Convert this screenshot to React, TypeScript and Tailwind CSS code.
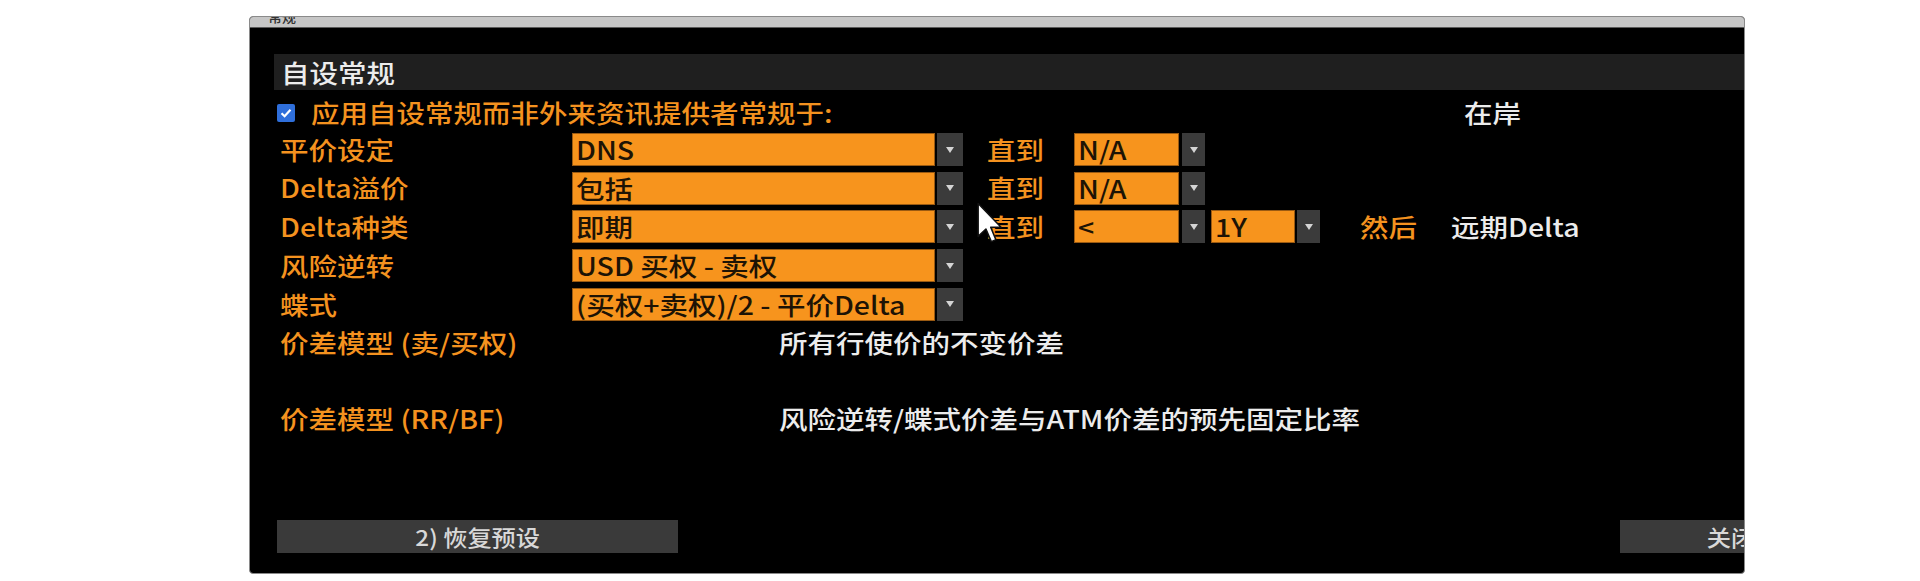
import React from 'react';

const T = ({ children, className = '' }: { children: React.ReactNode; className?: string }) => (
  <span className={`inline-block origin-left scale-x-[1.14] whitespace-nowrap leading-none ${className}`}>{children}</span>
);

const Arrow = ({ w }: { w: string }) => (
  <div className={`${w} h-[33px] shrink-0 bg-[#3b3b3b] flex items-center justify-center`}>
    <svg width="8" height="6" viewBox="0 0 8 6">
      <path d="M0 0h8L4 6z" fill="#d4d4d4" />
    </svg>
  </div>
);

const Field = ({ w, children }: { w: string; children: React.ReactNode }) => (
  <div className={`${w} h-[33px] shrink-0 bg-[#f7941d] border border-[#9a5a12] flex items-center pl-[3px] text-[#1d1305]`}>
    <T>{children}</T>
  </div>
);

const Label = ({ children, w = 'w-[298px]' }: { children: React.ReactNode; w?: string }) => (
  <div className={`${w} shrink-0 pl-[6px] text-[#f4921f]`}>
    <T>{children}</T>
  </div>
);

const Until = () => (
  <div className="ml-[24px] w-[87px] shrink-0 text-[#f4921f]">
    <T>直到</T>
  </div>
);

export default function App() {
  return (
    <div className="min-h-[581px] w-[1920px] bg-white pt-[16px] pl-[249px] font-['Noto_Sans_CJK_SC','Noto_Sans',sans-serif] text-[25px] font-medium">
      <div className="relative w-[1496px] h-[558px] bg-black border border-[#8a8a8a] rounded-[4px] overflow-hidden">
        {/* title bar */}
        <div className="h-[11px] bg-[#c6c6c6] border-b border-[#5a5a5a] overflow-hidden pl-[18px]">
          <div className="-mt-[8px] text-[14px] leading-none text-[#333]">常规</div>
        </div>

        <div className="pl-[24px] w-[1700px]">
          {/* header strip */}
          <div className="mt-[26px] h-[36px] bg-[#1f1f1f] flex items-center pl-[7px] text-[#ececec]">
            <T>自设常规</T>
          </div>

          {/* checkbox row */}
          <div className="mt-[6px] h-[33px] flex items-center">
            <div className="ml-[3px] w-[18px] h-[18px] rounded-[2px] bg-[#2f6fdb] flex items-center justify-center shrink-0">
              <svg width="12" height="10" viewBox="0 0 12 10">
                <path d="M1.5 5.2 L4.6 8.2 L10.5 1.8" stroke="#fff" strokeWidth="2.2" fill="none" />
              </svg>
            </div>
            <div className="ml-[16px] w-[1153px] shrink-0 text-[#f4921f]">
              <T>应用自设常规而非外来资讯提供者常规于:</T>
            </div>
            <div className="text-[#ececec]">
              <T>在岸</T>
            </div>
          </div>

          {/* rows */}
          <div className="mt-[4px] flex flex-col gap-[5.7px]">
            <div className="h-[33px] flex items-center">
              <Label>平价设定</Label>
              <Field w="w-[363px]">DNS</Field>
              <div className="ml-[2px]"><Arrow w="w-[26px]" /></div>
              <Until />
              <Field w="w-[105px]">N/A</Field>
              <div className="ml-[3px]"><Arrow w="w-[23px]" /></div>
            </div>
            <div className="h-[33px] flex items-center">
              <Label>Delta溢价</Label>
              <Field w="w-[363px]">包括</Field>
              <div className="ml-[2px]"><Arrow w="w-[26px]" /></div>
              <Until />
              <Field w="w-[105px]">N/A</Field>
              <div className="ml-[3px]"><Arrow w="w-[23px]" /></div>
            </div>
            <div className="h-[33px] flex items-center">
              <Label>Delta种类</Label>
              <Field w="w-[363px]">即期</Field>
              <div className="ml-[2px]"><Arrow w="w-[26px]" /></div>
              <Until />
              <Field w="w-[105px]">&lt;</Field>
              <div className="ml-[3px]"><Arrow w="w-[23px]" /></div>
              <div className="ml-[6px]"><Field w="w-[84px]">1Y</Field></div>
              <div className="ml-[2px]"><Arrow w="w-[23px]" /></div>
              <div className="ml-[40px] w-[91px] shrink-0 text-[#f4921f]"><T>然后</T></div>
              <div className="text-[#ececec]"><T>远期Delta</T></div>
            </div>
            <div className="h-[33px] flex items-center">
              <Label>风险逆转</Label>
              <Field w="w-[363px]">USD 买权 - 卖权</Field>
              <div className="ml-[2px]"><Arrow w="w-[26px]" /></div>
            </div>
            <div className="h-[33px] flex items-center">
              <Label>蝶式</Label>
              <Field w="w-[363px]">(买权+卖权)/2 - 平价Delta</Field>
              <div className="ml-[2px]"><Arrow w="w-[26px]" /></div>
            </div>
            <div className="h-[33px] flex items-center">
              <Label w="w-[505px]">价差模型 (卖/买权)</Label>
              <div className="text-[#ececec]"><T>所有行使价的不变价差</T></div>
            </div>
          </div>

          <div className="mt-[43px] h-[33px] flex items-center">
            <Label w="w-[505px]">价差模型 (RR/BF)</Label>
            <div className="text-[#ececec]"><T>风险逆转/蝶式价差与ATM价差的预先固定比率</T></div>
          </div>

          {/* buttons */}
          <div className="mt-[84.5px] h-[33px] flex items-center">
            <div className="ml-[3px] w-[401px] h-[33px] shrink-0 bg-[#3a3a3a] flex items-center justify-center text-[22px] text-[#d8d8d8]">
              <span className="inline-block scale-x-[1.1] whitespace-nowrap leading-none">2) 恢复预设</span>
            </div>
            <div className="ml-[942px] w-[222px] h-[33px] shrink-0 bg-[#3a3a3a] flex items-center justify-center text-[22px] text-[#d8d8d8]">
              <span className="inline-block scale-x-[1.1] whitespace-nowrap leading-none">关闭</span>
            </div>
          </div>
        </div>

        {/* mouse cursor */}
        <svg
          className="absolute left-[726px] top-[184px]"
          width="27"
          height="44"
          viewBox="0 0 12.5 20"
        >
          <path
            d="M1 1 L1 16.2 L4.6 12.8 L7.1 18.6 L9.2 17.7 L6.8 12 L11.6 12 Z"
            fill="#fff"
            stroke="#111"
            strokeWidth="0.7"
            strokeLinejoin="round"
          />
        </svg>
      </div>
    </div>
  );
}
